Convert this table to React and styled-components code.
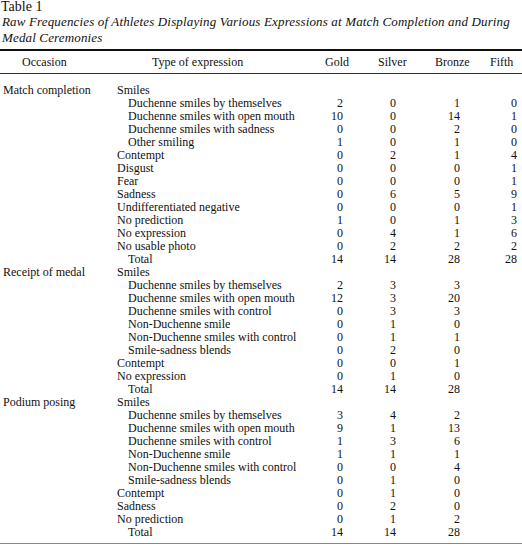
import React from 'react';
import styled, { createGlobalStyle } from 'styled-components';

const GlobalStyle = createGlobalStyle`
  body {
    margin: 0;
    background: #fff;
    color: #111;
    font-family: "Liberation Serif", "Times New Roman", serif;
  }
`;

const sections = [
  {
    occasion: 'Match completion',
    rows: [
      { label: 'Smiles' },
      { label: 'Duchenne smiles by themselves', sub: true, v: [2, 0, 1, 0] },
      { label: 'Duchenne smiles with open mouth', sub: true, v: [10, 0, 14, 1] },
      { label: 'Duchenne smiles with sadness', sub: true, v: [0, 0, 2, 0] },
      { label: 'Other smiling', sub: true, v: [1, 0, 1, 0] },
      { label: 'Contempt', v: [0, 2, 1, 4] },
      { label: 'Disgust', v: [0, 0, 0, 1] },
      { label: 'Fear', v: [0, 0, 0, 1] },
      { label: 'Sadness', v: [0, 6, 5, 9] },
      { label: 'Undifferentiated negative', v: [0, 0, 0, 1] },
      { label: 'No prediction', v: [1, 0, 1, 3] },
      { label: 'No expression', v: [0, 4, 1, 6] },
      { label: 'No usable photo', v: [0, 2, 2, 2] },
      { label: 'Total', sub: true, v: [14, 14, 28, 28] },
    ],
  },
  {
    occasion: 'Receipt of medal',
    rows: [
      { label: 'Smiles' },
      { label: 'Duchenne smiles by themselves', sub: true, v: [2, 3, 3] },
      { label: 'Duchenne smiles with open mouth', sub: true, v: [12, 3, 20] },
      { label: 'Duchenne smiles with control', sub: true, v: [0, 3, 3] },
      { label: 'Non-Duchenne smile', sub: true, v: [0, 1, 0] },
      { label: 'Non-Duchenne smiles with control', sub: true, v: [0, 1, 1] },
      { label: 'Smile-sadness blends', sub: true, v: [0, 2, 0] },
      { label: 'Contempt', v: [0, 0, 1] },
      { label: 'No expression', v: [0, 1, 0] },
      { label: 'Total', sub: true, v: [14, 14, 28] },
    ],
  },
  {
    occasion: 'Podium posing',
    rows: [
      { label: 'Smiles' },
      { label: 'Duchenne smiles by themselves', sub: true, v: [3, 4, 2] },
      { label: 'Duchenne smiles with open mouth', sub: true, v: [9, 1, 13] },
      { label: 'Duchenne smiles with control', sub: true, v: [1, 3, 6] },
      { label: 'Non-Duchenne smile', sub: true, v: [1, 1, 1] },
      { label: 'Non-Duchenne smiles with control', sub: true, v: [0, 0, 4] },
      { label: 'Smile-sadness blends', sub: true, v: [0, 1, 0] },
      { label: 'Contempt', v: [0, 1, 0] },
      { label: 'Sadness', v: [0, 2, 0] },
      { label: 'No prediction', v: [0, 1, 2] },
      { label: 'Total', sub: true, v: [14, 14, 28] },
    ],
  },
];

const columns = '117px 1fr 46px 53px 64px 56px';

// header text offsets within each column
const headers = [
  ['Occasion', 22],
  ['Type of expression', 35],
  ['Gold', 22],
  ['Silver', 29],
  ['Bronze', 33],
  ['Fifth', 24],
];

const Page = styled.div`
  width: 522px;
  font-size: 12px;
`;

const Label = styled.div`
  font-size: 14px;
  line-height: 13px;
  padding-left: 1px;
`;

const Title = styled.div`
  margin-top: 1px;
  padding-left: 2px;
  font-size: 13px;
  line-height: 16px;
  font-style: italic;
  letter-spacing: 0.15px;
  white-space: nowrap;
`;

const TopRule = styled.div`
  margin-top: 3px;
  height: 2px;
  background: #111;
`;

const HeadRow = styled.div`
  display: grid;
  grid-template-columns: ${columns};
  height: 22px;
  align-items: center;
  border-bottom: 1px solid #333;
`;

const HeadCell = styled.div`
  padding-left: ${p => p.$pl}px;
  white-space: nowrap;
`;

const Body = styled.div`
  padding: 10px 0 4px;
  border-bottom: 1px solid #888;
`;

const Row = styled.div`
  display: grid;
  grid-template-columns: ${columns};
  height: 13px;
  line-height: 13px;
  white-space: nowrap;
`;

const Occasion = styled.div`
  padding-left: 3px;
`;

const Type = styled.div`
  padding-left: ${p => (p.$sub ? 11 : 0)}px;
`;

const Num = styled.div`
  text-align: right;
  padding-right: ${p => p.$pr}px;
`;

const numPad = [6, 6, 6, 5];

export default function App() {
  return (
    <Page>
      <GlobalStyle />
      <Label>Table 1</Label>
      <Title>
        Raw Frequencies of Athletes Displaying Various Expressions at Match Completion and During
        <br />
        Medal Ceremonies
      </Title>
      <TopRule />
      <HeadRow>
        {headers.map(([text, pl]) => (
          <HeadCell key={text} $pl={pl}>{text}</HeadCell>
        ))}
      </HeadRow>
      <Body>
        {sections.map(section =>
          section.rows.map((row, i) => (
            <Row key={section.occasion + i}>
              <Occasion>{i === 0 ? section.occasion : ''}</Occasion>
              <Type $sub={row.sub}>{row.label}</Type>
              {[0, 1, 2, 3].map(c => (
                <Num key={c} $pr={numPad[c]}>
                  {row.v && row.v[c] !== undefined ? row.v[c] : ''}
                </Num>
              ))}
            </Row>
          ))
        )}
      </Body>
    </Page>
  );
}
